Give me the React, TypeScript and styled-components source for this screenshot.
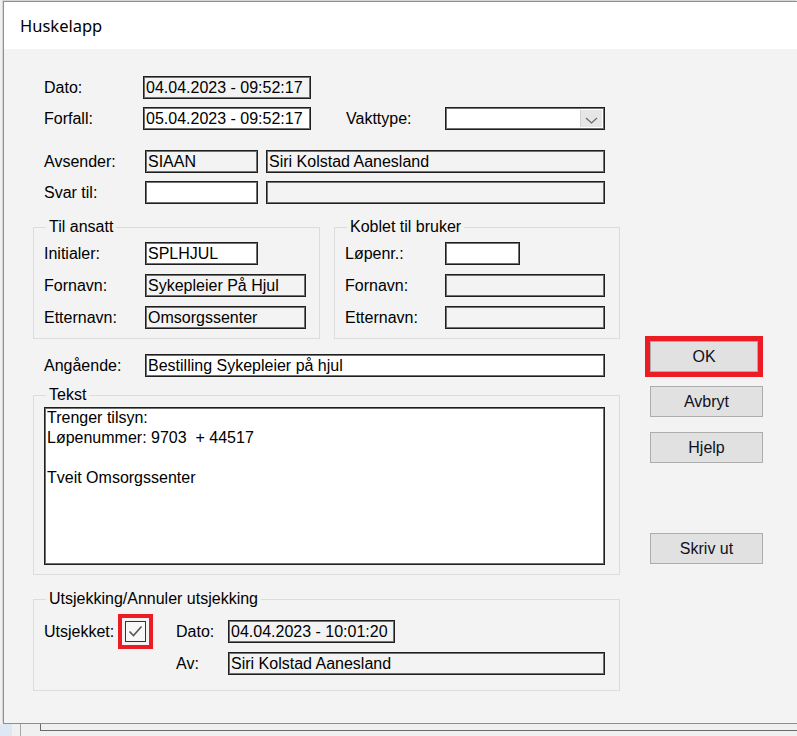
import React from "react";
import styled, { createGlobalStyle } from "styled-components";

const GlobalStyle = createGlobalStyle`
  html, body {
    margin: 0;
    padding: 0;
  }
  body {
    background: #f0f0f0;
    font-family: "Liberation Sans", Arial, sans-serif;
    overflow: hidden;
  }
`;

const Screen = styled.div`
  width: 797px;
  height: 736px;
  overflow: hidden;
  display: flex;
  flex-direction: column;
  background: #f0f0f0;
`;

const Window = styled.div`
  box-sizing: border-box;
  margin: 1px 0 0 3px;
  height: 723px;
  border: 1px solid #8f8f8f;
  border-right: none;
  box-shadow: -1px -1px 0 #d6d6d6;
  display: flex;
  flex-direction: column;
  background: #f3f3f3;
`;

const TitleBar = styled.div`
  height: 47px;
  flex: none;
  background: #fff;
  display: flex;
  align-items: center;
  padding-left: 16px;
  font-family: "Noto Sans", "Open Sans", sans-serif;
  font-size: 16.5px;
  color: #000;
`;

const Body = styled.div`
  flex: 1;
  display: flex;
  padding-left: 29px;
`;

const LeftCol = styled.div`
  width: 587px;
  display: flex;
  flex-direction: column;
  padding-top: 27px;
`;

const RightCol = styled.div`
  display: flex;
  flex-direction: column;
  margin-left: 30px;
  padding-top: 287px;
`;

const Row = styled.div<{ $top?: number; $indent?: number }>`
  display: flex;
  align-items: center;
  height: 23px;
  margin-top: ${(p) => p.$top ?? 0}px;
  padding-left: ${(p) => p.$indent ?? 0}px;
`;

const Label = styled.span<{ $w?: number; $ml?: number }>`
  width: ${(p) => (p.$w ? `${p.$w}px` : "auto")};
  margin-left: ${(p) => p.$ml ?? 0}px;
  flex: none;
  font-size: 16px;
  color: #000;
  white-space: nowrap;
`;

const Field = styled.div<{ $w: number; $ro?: boolean; $ml?: number }>`
  box-sizing: border-box;
  width: ${(p) => p.$w}px;
  height: 23px;
  flex: none;
  margin-left: ${(p) => p.$ml ?? 0}px;
  border: 1px solid #1f1f1f;
  box-shadow: inset 0 0 0 1px #707070;
  background: ${(p) => (p.$ro ? "#f3f3f3" : "#fff")};
  padding-left: 2px;
  font-size: 16px;
  line-height: 21px;
  color: #000;
  white-space: nowrap;
  overflow: hidden;
`;

const Combo = styled.div`
  box-sizing: border-box;
  width: 160px;
  height: 23px;
  border: 1px solid #1f1f1f;
  box-shadow: inset 0 0 0 1px #707070;
  background: #fff;
  display: flex;
  justify-content: flex-end;
  padding: 2px;
`;

const ComboButton = styled.div`
  width: 22px;
  background: #e6e6e6;
  border-left: 1px solid #d2d2d2;
  display: flex;
  align-items: flex-end;
  justify-content: center;
  padding-bottom: 3px;
  box-sizing: border-box;
`;

const GroupRow = styled.div`
  display: flex;
  gap: 14px;
  margin-top: 14px;
`;

const Group = styled.fieldset<{ $w: number; $top?: number; $pt: number; $pb: number }>`
  box-sizing: border-box;
  width: ${(p) => p.$w}px;
  margin: ${(p) => p.$top ?? 0}px 0 0 0;
  padding: ${(p) => p.$pt}px 10px ${(p) => p.$pb}px 10px;
  border: 1px solid #dcdcdc;
  min-width: 0;
  display: flex;
  flex-direction: column;
  gap: 9px;
`;

const Legend = styled.legend`
  padding: 0 3px;
  margin-left: 2px;
  font-size: 16px;
  line-height: 18px;
  color: #000;
`;

const TextBox = styled.div`
  box-sizing: border-box;
  width: 561px;
  height: 158px;
  border: 1px solid #1f1f1f;
  box-shadow: inset 0 0 0 1px #707070;
  background: #fff;
  padding: 0 0 0 2px;
  font-size: 16px;
  line-height: 20px;
  color: #000;
  white-space: pre;
`;

const Highlight = styled.div<{ $pad: number; $ml?: number }>`
  flex: none;
  border: ${(p) => (p.$pad ? 4 : 5)}px solid #ed1c24;
  padding: ${(p) => p.$pad}px;
  margin-left: ${(p) => p.$ml ?? 0}px;
  display: flex;
`;

const CheckBox = styled.div`
  box-sizing: border-box;
  width: 21px;
  height: 21px;
  border: 1px solid #333;
  background: #f7f7f7;
  display: flex;
  align-items: center;
  justify-content: center;
`;

const Button = styled.button<{ $w?: number; $top?: number }>`
  box-sizing: border-box;
  width: ${(p) => p.$w ?? 113}px;
  height: 31px;
  margin: ${(p) => p.$top ?? 0}px 0 0 0;
  padding: 0;
  background: #e1e1e1;
  border: 1px solid #adadad;
  font-family: "Liberation Sans", Arial, sans-serif;
  font-size: 16px;
  color: #101020;
`;

const BottomStrip = styled.div`
  flex: 1;
  display: flex;
`;

const BlueEdge = styled.div`
  width: 12px;
  background: #dde8f4;
`;

const VLine = styled.div`
  width: 1px;
  margin-left: 8px;
  background: #a8a8a8;
`;

const BackPanel = styled.div`
  flex: 1;
  margin-left: 19px;
  height: 6px;
  border-left: 1px solid #6a6a6a;
  border-bottom: 1px solid #6a6a6a;
`;

const App: React.FC = () => {
  return (
    <Screen>
      <GlobalStyle />
      <Window>
        <TitleBar>Huskelapp</TitleBar>
        <Body>
          <LeftCol>
            <Row $indent={11}>
              <Label $w={99}>Dato:</Label>
              <Field $w={168} $ro>
                04.04.2023 - 09:52:17
              </Field>
            </Row>
            <Row $indent={11} $top={8}>
              <Label $w={99}>Forfall:</Label>
              <Field $w={168}>05.04.2023 - 09:52:17</Field>
              <Label $w={99} $ml={35}>
                Vakttype:
              </Label>
              <Combo>
                <ComboButton>
                  <svg width="13" height="7" viewBox="0 0 13 7">
                    <polyline points="1,1 6.5,6 12,1" fill="none" stroke="#6b6b6b" strokeWidth="1.2" />
                  </svg>
                </ComboButton>
              </Combo>
            </Row>
            <Row $indent={11} $top={20}>
              <Label $w={101}>Avsender:</Label>
              <Field $w={113} $ro>
                SIAAN
              </Field>
              <Field $w={339} $ml={8} $ro>
                Siri Kolstad Aanesland
              </Field>
            </Row>
            <Row $indent={11} $top={8}>
              <Label $w={101}>Svar til:</Label>
              <Field $w={113} />
              <Field $w={339} $ml={8} $ro />
            </Row>

            <GroupRow>
              <Group $w={287} $pt={6} $pb={9}>
                <Legend>Til ansatt</Legend>
                <Row>
                  <Label $w={101}>Initialer:</Label>
                  <Field $w={113}>SPLHJUL</Field>
                </Row>
                <Row>
                  <Label $w={101}>Fornavn:</Label>
                  <Field $w={161} $ro>
                    Sykepleier På Hjul
                  </Field>
                </Row>
                <Row>
                  <Label $w={101}>Etternavn:</Label>
                  <Field $w={161} $ro>
                    Omsorgssenter
                  </Field>
                </Row>
              </Group>
              <Group $w={286} $pt={6} $pb={9}>
                <Legend>Koblet til bruker</Legend>
                <Row>
                  <Label $w={100}>Løpenr.:</Label>
                  <Field $w={75} />
                </Row>
                <Row>
                  <Label $w={100}>Fornavn:</Label>
                  <Field $w={160} $ro />
                </Row>
                <Row>
                  <Label $w={100}>Etternavn:</Label>
                  <Field $w={160} $ro />
                </Row>
              </Group>
            </GroupRow>

            <Row $indent={11} $top={15}>
              <Label $w={101}>Angående:</Label>
              <Field $w={460}>Bestilling Sykepleier på hjul</Field>
            </Row>

            <Group $w={587} $top={9} $pt={3} $pb={9}>
              <Legend>Tekst</Legend>
              <TextBox>{"Trenger tilsyn:\nLøpenummer: 9703  + 44517\n\nTveit Omsorgssenter"}</TextBox>
            </Group>

            <Group $w={587} $top={15} $pt={12} $pb={15}>
              <Legend>Utsjekking/Annuler utsjekking</Legend>
              <Row>
                <Label $w={74}>Utsjekket:</Label>
                <Highlight $pad={3}>
                  <CheckBox>
                    <svg width="15" height="13" viewBox="0 0 15 13">
                      <polyline points="1.5,6.5 5.5,10.5 13.5,1.5" fill="none" stroke="#555" strokeWidth="1.6" />
                    </svg>
                  </CheckBox>
                </Highlight>
                <Label $w={52} $ml={23}>
                  Dato:
                </Label>
                <Field $w={167} $ro>
                  04.04.2023 - 10:01:20
                </Field>
              </Row>
              <Row>
                <Label $w={52} $ml={132}>
                  Av:
                </Label>
                <Field $w={377} $ro>
                  Siri Kolstad Aanesland
                </Field>
              </Row>
            </Group>
          </LeftCol>

          <RightCol>
            <Highlight $pad={0} $ml={-5}>
              <Button $w={108}>OK</Button>
            </Highlight>
            <Button $top={9}>Avbryt</Button>
            <Button $top={15}>Hjelp</Button>
            <Button $top={70}>Skriv ut</Button>
          </RightCol>
        </Body>
      </Window>
      <BottomStrip>
        <BlueEdge />
        <VLine />
        <BackPanel />
      </BottomStrip>
    </Screen>
  );
};

export default App;
